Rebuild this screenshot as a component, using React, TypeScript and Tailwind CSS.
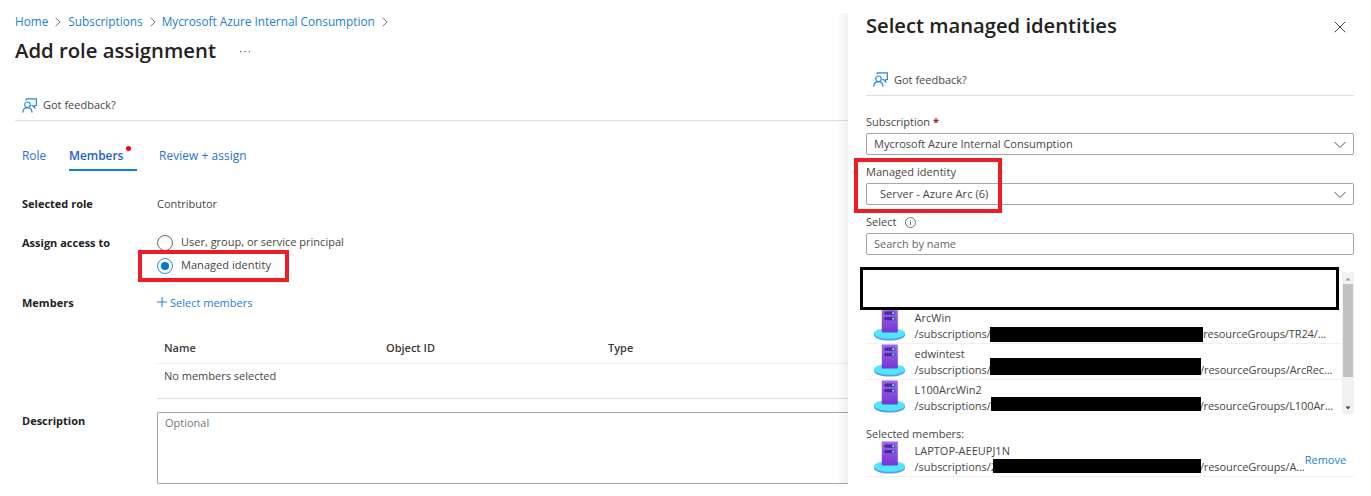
import type { ReactNode } from "react";

function FeedbackIcon() {
  return (
    <svg width="15" height="15" viewBox="0 0 15 15" fill="none" stroke="#2a8ad8" strokeWidth="1.2">
      <circle cx="5.500" cy="6.800" r="2.800" />
      <path d="M.7 14.600C1 11.600 2.800 9.700 5.500 9.700s4.200 1.900 4.600 4.900" />
      <path d="M4.200 2.500V.8h10.200v6.700h-1.700v2.200L10.600 7.500H9.300" />
    </svg>
  );
}

function ServerIcon() {
  return (
    <svg width="31" height="33" viewBox="0 0 31 33" className="shrink-0">
      <defs>
        <linearGradient id="tower" x1="0" y1="0" x2="0" y2="1">
          <stop offset="0" stopColor="#a067ee" />
          <stop offset="1" stopColor="#7536d3" />
        </linearGradient>
      </defs>
      <path d="M0 25.300v1.700C0 30.100 7 32.600 15.500 32.600S31 30.100 31 27v-1.700z" fill="#5a9cf0" />
      <ellipse cx="15.500" cy="25.300" rx="15.500" ry="5.500" fill="#50e6ff" />
      <rect x="7.800" y="0.500" width="16" height="24" rx="0.700" fill="url(#tower)" />
      <rect x="10.200" y="3.500" width="11.200" height="3.200" rx="1.600" fill="#4b2a96" />
      <rect x="10.200" y="9" width="11.200" height="3.200" rx="1.600" fill="#4b2a96" />
      <circle cx="19.300" cy="5.100" r="1.200" fill="#50e6ff" />
      <circle cx="19.300" cy="10.600" r="1.200" fill="#50e6ff" />
    </svg>
  );
}

function Crumb({ children, className }: { children: string; className: string }) {
  return (
    <>
      <a className={className}>{children}</a>
      <svg width="6" height="10" viewBox="0 0 6 10" fill="none" stroke="#777" strokeWidth="1" className="mt-px">
        <path d="M.6.8 5.200 5 .6 9.200" />
      </svg>
    </>
  );
}

function Field({ label, children, className = "" }: { label: string; children?: ReactNode; className?: string }) {
  return (
    <div className={`flex ${className}`}>
      <div className="w-[135px] shrink-0 font-bold leading-5 text-[#222]">{label}</div>
      {children}
    </div>
  );
}

function Dropdown({ value, className = "pl-[7px]" }: { value: string; className?: string }) {
  return (
    <div className={`flex h-[22px] items-center justify-between rounded-[2px] border border-[#a6a6a6] pt-px pr-[7px] ${className}`}>
      <span>{value}</span>
      <svg width="12" height="8" viewBox="0 0 12 8" fill="none" stroke="#555" strokeWidth="1">
        <path d="M.5 1 6 6.500 11.500 1" />
      </svg>
    </div>
  );
}

type Identity = { name: string; prefix: string; bar: string; suffix: string };

const identities: Identity[] = [
  { name: "ArcWin", prefix: "/subscriptions/", bar: "mt-px -ml-px h-[15px] w-[213.5px]", suffix: "resourceGroups/TR24/..." },
  { name: "edwintest", prefix: "/subscriptions/", bar: "-mt-1 -ml-px -mr-px h-[17px] w-[211.5px]", suffix: "/resourceGroups/ArcRec..." },
  { name: "L100ArcWin2", prefix: "/subscriptions/", bar: "-mt-px mr-[-1.5px] h-[14px] w-[210.5px]", suffix: "/resourceGroups/L100Ar..." },
];

function IdentityRow({ item, children }: { item: Identity; children?: ReactNode }) {
  return (
    <div className="flex h-9 items-start border-b border-[#f0f0f0] pl-2">
      <ServerIcon />
      <div className="ml-[9.5px] flex flex-col pt-[2px] leading-4 whitespace-nowrap">
        <span>{item.name}</span>
        <div className="flex h-4 items-start tracking-[-0.03px]">
          <span>{item.prefix}</span>
          <span className={`z-10 shrink-0 bg-black ${item.bar}`} />
          <span className="tracking-[-0.1px]">{item.suffix}</span>
        </div>
      </div>
      {children}
    </div>
  );
}

export default function App() {
  return (
    <div className="relative flex h-[496px] w-[1371px] overflow-hidden bg-white font-['Open_Sans','Noto_Sans',sans-serif] text-[11px] text-[#484644]">
      <main className="relative w-[848px] shrink-0 overflow-hidden pt-3 pl-[15px]">
        <nav className="flex h-[19px] items-center text-[11.8px] text-[#2180d3]">
          <Crumb className="mr-[7px]">Home</Crumb>
          <Crumb className="mr-[7px] ml-[7px]">Subscriptions</Crumb>
          <Crumb className="mr-[7px] ml-[6px]">Mycrosoft Azure Internal Consumption</Crumb>
        </nav>
        <div className="flex h-[38px] items-center">
          <h1 className="text-[20.3px] font-semibold text-[#222]">Add role assignment</h1>
          <svg width="11" height="2" viewBox="0 0 11 2" fill="#666" className="mt-[4px] ml-6">
            <rect width="1.300" height="1.300" />
            <rect x="4.400" width="1.300" height="1.300" />
            <rect x="8.800" width="1.300" height="1.300" />
          </svg>
        </div>
        <div className="mt-[21px] flex h-[31px] items-center gap-[6px] border-b border-[#dedede] pl-[7px]">
          <FeedbackIcon />
          <span>Got feedback?</span>
        </div>
        <div className="mt-5 flex h-[30px] pl-[7px] text-[11.9px] leading-[29px] text-[#2a6fdb]">
          <span className="w-[47px]">Role</span>
          <span className="relative w-[68px] border-b-2 border-[#0f7fd6] font-semibold text-[#1a5fd0]">
            Members
            <i className="absolute top-[5px] left-[57px] size-[5px] rounded-full bg-[#f00]" />
          </span>
          <span className="ml-[22px] tracking-[0.08px]">Review + assign</span>
        </div>
        <div className="pl-[7px]">
          <Field label="Selected role" className="mt-[23px]">
            <span className="leading-5">Contributor</span>
          </Field>
          <div className="mt-[17px] flex h-[46px]">
            <div className="w-[135px] shrink-0 font-bold leading-[23px] text-[#222]">Assign access to</div>
            <div className="flex flex-col">
              <label className="flex h-[23px] items-center gap-2">
                <span className="size-4 rounded-full border border-[#666]" />
                <span>User, group, or service principal</span>
              </label>
              <label className="flex h-[23px] items-center gap-2">
                <span className="flex size-4 items-center justify-center rounded-full border border-[#2b8add]">
                  <i className="size-2 rounded-full bg-[#0078d4]" />
                </span>
                <span className="tracking-[0.05px]">Managed identity</span>
              </label>
            </div>
          </div>
          <Field label="Members" className="mt-4">
            <span className="flex h-5 items-center gap-[3px] text-[#2180d3]">
              <svg width="10" height="10" viewBox="0 0 10 10" stroke="#2180d3" strokeWidth="1" className="-mt-[3px]">
                <path d="M5 0v10M0 5h10" />
              </svg>
              Select members
            </span>
          </Field>
          <div className="mt-5 ml-[135px]">
            <div className="flex h-[31px] items-center border-b border-[#ebebeb] pl-[7px] font-semibold text-[#3b3a39]">
              <span className="w-[222px]">Name</span>
              <span className="w-[222px]">Object ID</span>
              <span>Type</span>
            </div>
            <div className="h-[35px] border-b border-[#dedede] pl-[7px] leading-[24px]">No members selected</div>
          </div>
          <div className="mt-[13px] flex">
            <div className="-mt-px w-[135px] shrink-0 font-bold leading-5 text-[#222]">Description</div>
            <div className="h-[72px] grow rounded-l-[2px] border border-r-0 border-[#a6a6a6] pt-px pl-[7px] leading-[18px] text-[#767676]">
              Optional
            </div>
          </div>
        </div>
        <div className="absolute top-[13px] right-0 h-[471px] w-3 bg-linear-to-r from-transparent to-black/6" />
        <div className="absolute top-[250px] left-[138px] h-8 w-[151px] border-4 border-[#ee1c25]" />
      </main>

      <aside className="relative mt-[13px] h-[471px] w-[523px] bg-white pr-[17px] pl-[18px]">
        <header className="flex h-[26px] items-center justify-between pr-2">
          <h2 className="-mt-[2px] text-[20.2px] font-semibold text-[#222]">Select managed identities</h2>
          <svg width="12" height="12" viewBox="0 0 12 12" stroke="#444" strokeWidth="1" className="mt-[2px]">
            <path d="M.7.7l10.600 10.600M11.300.7.7 11.300" />
          </svg>
        </header>
        <div className="mt-[25px] flex h-8 items-center gap-[6px] border-b border-[#dedede] pl-[7px]">
          <FeedbackIcon />
          <span className="pt-[2px]">Got feedback?</span>
        </div>
        <div className="mt-[18px] h-[19px] leading-4">
          Subscription <b className="text-[#a4262c]">*</b>
        </div>
        <Dropdown value="Mycrosoft Azure Internal Consumption" />
        <div className="mt-[9px] h-[19px] leading-4 tracking-[0.05px]">Managed identity</div>
        <Dropdown value="Server - Azure Arc (6)" className="pl-[13px] tracking-[0.07px]" />
        <div className="mt-[9px] flex h-[19px] gap-[9px] leading-4">
          Select
          <svg width="11" height="11" viewBox="0 0 11 11" fill="none" stroke="#666" strokeWidth=".9" className="mt-[3px]">
            <circle cx="5.500" cy="5.500" r="5" />
            <path d="M5.500 4.700v3.500M5.500 2.700v1.100" />
          </svg>
        </div>
        <div className="h-[22px] rounded-[2px] border border-[#a6a6a6] pl-[7px] leading-5 text-[#666]">Search by name</div>

        <div className="mt-[17px] flex h-[142px]">
          <div className="w-[476px] overflow-hidden pt-9">
            {identities.map((item) => (
              <IdentityRow key={item.name} item={item} />
            ))}
          </div>
          <div className="flex w-3 flex-col items-center bg-[#f1f1f1]">
            <svg width="6" height="4" viewBox="0 0 6 4" className="mt-[5px] mb-[3px] shrink-0">
              <path d="M.5 3.500 3 .7l2.500 2.800z" fill="#999" />
            </svg>
            <div className="h-[93px] w-[10px] shrink-0 bg-[#c1c1c1]" />
            <svg width="6" height="4" viewBox="0 0 6 4" className="mt-auto mb-[4px] shrink-0">
              <path d="M.5.500h5L3 3.400z" fill="#444" />
            </svg>
          </div>
        </div>

        <div className="mt-3 h-[15px] leading-4">Selected members:</div>
        <IdentityRow
          item={{
            name: "LAPTOP-AEEUPJ1N",
            prefix: "/subscriptions/2",
            bar: "-ml-[4px] -mr-[1px] h-[14px] w-[208px]",
            suffix: "/resourceGroups/A...",
          }}
        >
          <a className="mt-[11px] leading-4 text-[#2180d3]">Remove</a>
        </IdentityRow>

        <div className="absolute top-[254px] left-3 z-20 h-[43px] w-[479px] border-[3px] border-black bg-white" />
        <div className="absolute top-[145px] left-[6px] z-20 h-[55px] w-[148px] border-4 border-[#ee1c25]" />
      </aside>
    </div>
  );
}
